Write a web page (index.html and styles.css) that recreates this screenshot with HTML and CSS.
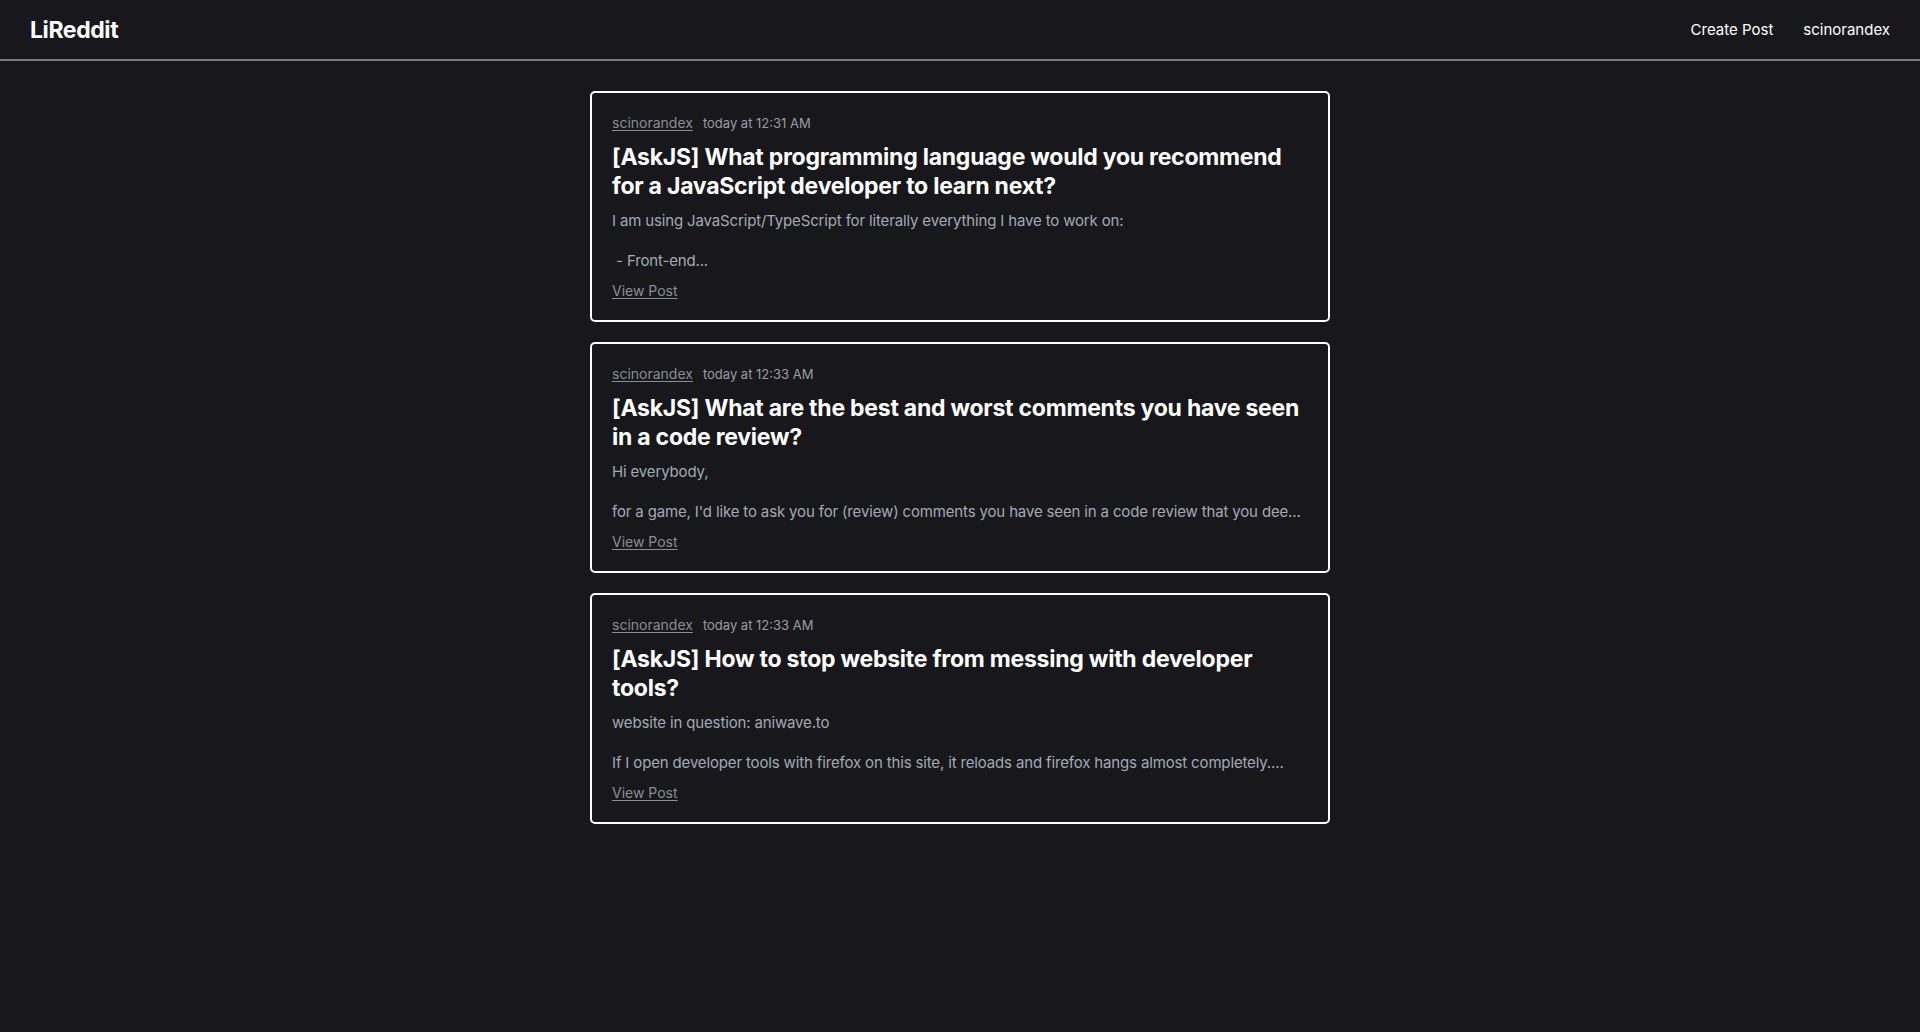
FILE: index.html
```html
<!DOCTYPE html>
<html lang="en">
<head>
<meta charset="utf-8">
<title>LiReddit</title>
<link rel="stylesheet" href="styles.css">
</head>
<body>
<header class="navbar">
  <a class="logo" href="#">LiReddit</a>
  <nav class="nav-links">
    <a href="#">Create Post</a>
    <a href="#">scinorandex</a>
  </nav>
</header>
<main class="feed">
  <article class="post">
    <div class="meta"><a class="author" href="#">scinorandex</a><span class="time">today at 12:31 AM</span></div>
    <h2 class="title">[AskJS] What programming language would you recommend for a JavaScript developer to learn next?</h2>
    <p class="snippet">I am using JavaScript/TypeScript for literally everything I have to work on:

 - Front-end...</p>
    <a class="view" href="#">View Post</a>
  </article>
  <article class="post">
    <div class="meta"><a class="author" href="#">scinorandex</a><span class="time">today at 12:33 AM</span></div>
    <h2 class="title">[AskJS] What are the best and worst comments you have seen in a code review?</h2>
    <p class="snippet">Hi everybody,

for a game, I'd like to ask you for (review) comments you have seen in a code review that you dee...</p>
    <a class="view" href="#">View Post</a>
  </article>
  <article class="post">
    <div class="meta"><a class="author" href="#">scinorandex</a><span class="time">today at 12:33 AM</span></div>
    <h2 class="title">[AskJS] How to stop website from messing with developer tools?</h2>
    <p class="snippet">website in question: aniwave.to

If I open developer tools with firefox on this site, it reloads and firefox hangs almost completely....</p>
    <a class="view" href="#">View Post</a>
  </article>
</main>
</body>
</html>
```

FILE: styles.css
```css
* { box-sizing: border-box; }
html, body {
  margin: 0;
  padding: 0;
  background: #18181c;
  color: #ffffff;
  font-family: Inter, "Noto Sans", sans-serif;
}
body { min-height: 1032px; }
a { color: inherit; }

.navbar {
  display: flex;
  align-items: center;
  justify-content: space-between;
  height: 61px;
  padding: 0 30px 0 30px;
  border-bottom: 2px solid #7a7a82;
}
.logo {
  font-size: 23px;
  font-weight: 700;
  letter-spacing: -0.4px;
  text-decoration: none;
  color: #ffffff;
}
.nav-links {
  display: flex;
  gap: 30px;
}
.nav-links a {
  font-size: 15px;
  text-decoration: none;
  color: #ffffff;
}

.feed {
  width: 740px;
  margin: 30px auto 0;
  display: flex;
  flex-direction: column;
  gap: 20px;
}
.post {
  border: 2px solid #ffffff;
  border-radius: 5px;
  padding: 20px 20px 19px 20px;
  display: flex;
  flex-direction: column;
}
.meta {
  display: flex;
  align-items: baseline;
  gap: 10px;
  font-size: 14px;
  line-height: 20px;
}
.author { color: #8c8c95; text-decoration: underline; text-underline-offset: 2px; }
.time { color: #9b9ba3; font-size: 13px; }
.title {
  margin: 10px 0 0;
  font-size: 23px;
  line-height: 29px;
  font-weight: 700;
  letter-spacing: -0.24px;
  color: #ffffff;
}
.snippet {
  margin: 10px 0 0;
  white-space: pre-wrap;
  font-size: 15px;
  line-height: 20px;
  letter-spacing: -0.15px;
  color: #a2a9b6;
}
.view {
  margin-top: 10px;
  align-self: flex-start;
  font-size: 14px;
  line-height: 20px;
  color: #8c8c95;
  text-underline-offset: 2px;
}
```
